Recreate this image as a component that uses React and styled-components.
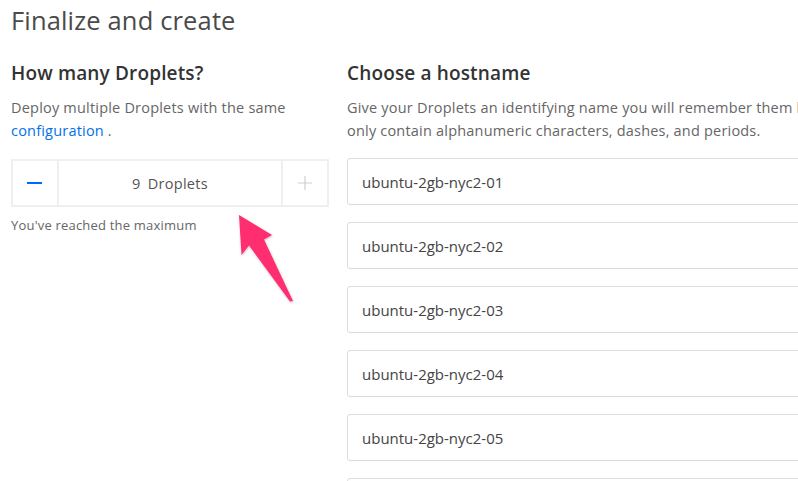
import React from "react";
import styled, { createGlobalStyle } from "styled-components";

const Global = createGlobalStyle`
  html, body { margin: 0; padding: 0; background: #fff; }
  body {
    width: 798px; height: 481px; overflow: hidden;
    font-family: "Open Sans", "Liberation Sans", sans-serif;
    -webkit-font-smoothing: antialiased;
  }
`;

const Page = styled.div`
  position: relative;
  padding: 0 0 0 11px;
  width: 787px;
  height: 481px;
  overflow: hidden;
`;

const Title = styled.h1`
  margin: 0;
  padding-top: 3px;
  font-size: 25.5px;
  line-height: 34px;
  font-weight: 400;
  color: #4a4a4a;
  letter-spacing: 0.15px;
`;

const Columns = styled.div`
  display: flex;
  gap: 18px;
  margin-top: 23px;
`;

const Column = styled.div`
  flex: 0 0 ${(p) => p.$width}px;
  width: ${(p) => p.$width}px;
`;

const Heading = styled.h2`
  margin: 0;
  font-size: 19px;
  line-height: 26px;
  font-weight: 600;
  color: #333;
  letter-spacing: 0.15px;
`;

const Desc = styled.p`
  margin: 10px 0 0;
  font-size: 14.5px;
  line-height: 23px;
  color: #666;
  letter-spacing: 0.2px;
  white-space: ${(p) => (p.$nowrap ? "nowrap" : "normal")};
`;

const Link = styled.a`
  color: #0071eb;
  text-decoration: none;
`;

const Stepper = styled.div`
  margin-top: 17px;
  display: flex;
  height: 48px;
  box-sizing: border-box;
  border: 2px solid #efefef;
`;

const StepButton = styled.button`
  flex: 0 0 46px;
  border: none;
  background: #fff;
  padding: 0;
  display: flex;
  align-items: center;
  justify-content: center;
  ${(p) => (p.$side === "left" ? "border-right: 2px solid #efefef;" : "border-left: 2px solid #efefef;")}
`;

const Count = styled.div`
  flex: 1;
  display: flex;
  align-items: center;
  justify-content: center;
  font-size: 14.5px;
  color: #555;
  letter-spacing: 0.3px;
  word-spacing: 3px;
`;

const Note = styled.div`
  margin-top: 9px;
  font-size: 13px;
  color: #666;
  letter-spacing: 0.2px;
`;

const Inputs = styled.div`
  margin-top: 16px;
  display: flex;
  flex-direction: column;
  gap: 17px;
`;

const HostInput = styled.div`
  height: 47px;
  box-sizing: border-box;
  border: 1px solid #dcdcdc;
  border-radius: 3px;
  display: flex;
  align-items: center;
  padding-left: 14px;
  font-size: 15px;
  letter-spacing: 0;
  color: #444;
`;

const Arrow = styled.svg`
  position: absolute;
  left: 234px;
  top: 208px;
  width: 64px;
  height: 98px;
  overflow: visible;
`;

const hosts = ["01", "02", "03", "04", "05", "06"];

export default function App() {
  return (
    <>
      <Global />
      <Page>
        <Title>Finalize and create</Title>
        <Columns>
          <Column $width={318}>
            <Heading>How many Droplets?</Heading>
            <Desc>
              Deploy multiple Droplets with the same <Link href="#">configuration</Link> .
            </Desc>
            <Stepper>
              <StepButton $side="left" aria-label="decrease">
                <svg width="16" height="4" viewBox="0 0 16 4">
                  <rect x="0" y="1" width="15" height="2" fill="#0069ff" />
                </svg>
              </StepButton>
              <Count>9 Droplets</Count>
              <StepButton $side="right" aria-label="increase">
                <svg width="16" height="16" viewBox="0 0 16 16">
                  <path d="M8 1v14M1 8h14" stroke="#cfcfcf" strokeWidth="1.2" />
                </svg>
              </StepButton>
            </Stepper>
            <Note>You've reached the maximum</Note>
          </Column>
          <Column $width={620}>
            <Heading>Choose a hostname</Heading>
            <Desc $nowrap>
              Give your Droplets an identifying name you will remember them by. Your Droplet name can
              <br />
              only contain alphanumeric characters, dashes, and periods.
            </Desc>
            <Inputs>
              {hosts.map((h) => (
                <HostInput key={h}>ubuntu-2gb-nyc2-{h}</HostInput>
              ))}
            </Inputs>
          </Column>
        </Columns>
        <Arrow viewBox="234 208 64 98">
          <defs>
            <filter id="sh" x="-20%" y="-20%" width="140%" height="140%">
              <feDropShadow dx="0.5" dy="1" stdDeviation="0.8" floodColor="#000" floodOpacity="0.25" />
            </filter>
          </defs>
          <polygon
            points="239,215 272,235 264,239.5 293,301 290,301.5 249,245.5 241.5,255"
            fill="#ff2d6f"
            filter="url(#sh)"
          />
        </Arrow>
      </Page>
    </>
  );
}
